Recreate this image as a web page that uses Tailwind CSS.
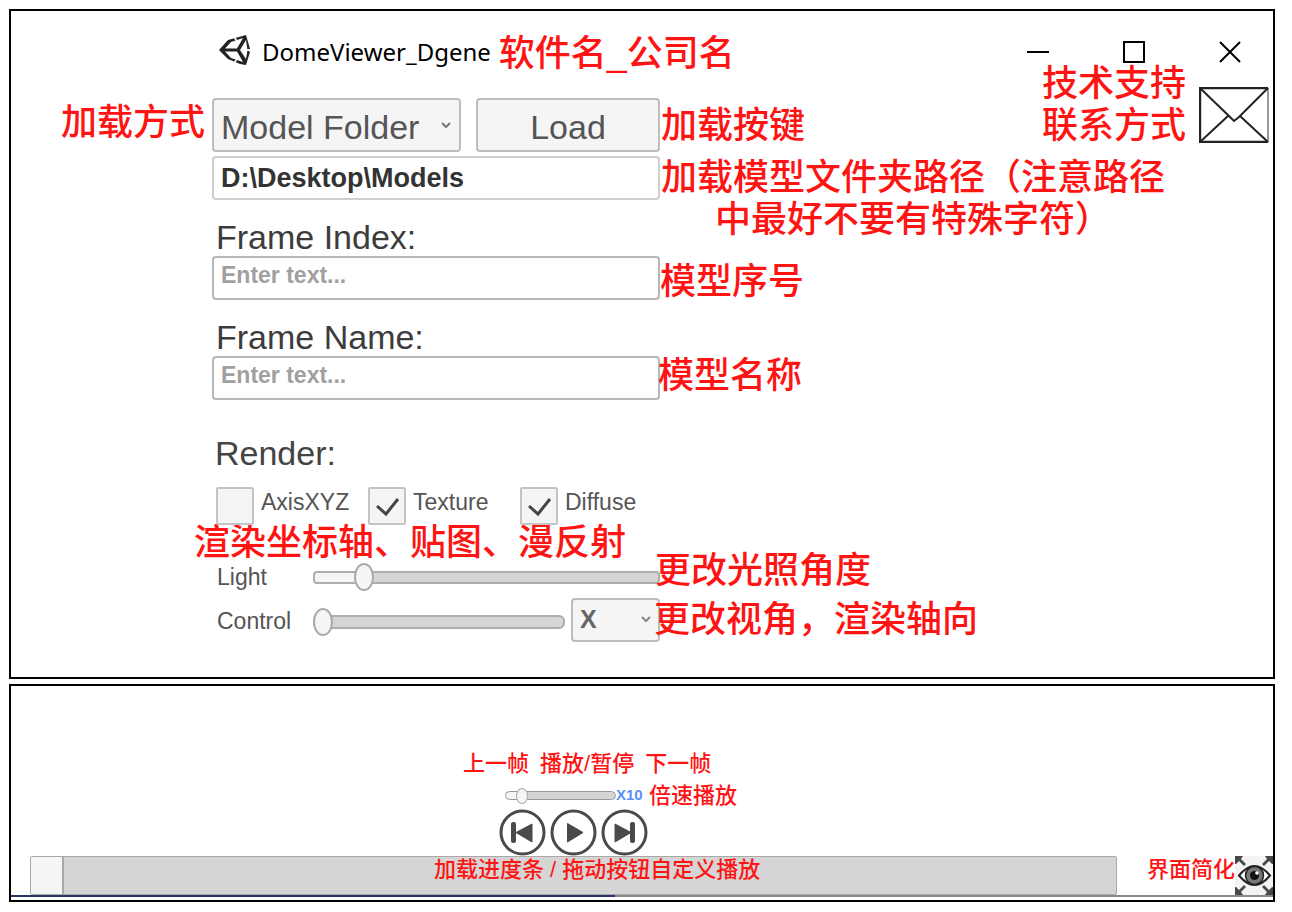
<!DOCTYPE html>
<html lang="zh-CN">
<head>
<meta charset="utf-8">
<meta name="viewport" content="width=device-width, initial-scale=1">
<title>DomeViewer_Dgene</title>
<script src="https://cdn.jsdelivr.net/npm/@tailwindcss/browser@4"></script>
</head>
<body class="bg-white font-['Liberation_Sans','Noto_Sans_CJK_SC',sans-serif] text-[#444]">
<main class="flex flex-col gap-[5px] pt-[9px] pr-[17px] pl-[9px]">

  <section class="border-2 border-black pb-[35px]" aria-label="DomeViewer">
    <!-- title bar -->
    <header class="flex h-[82px] items-center pl-[208px] pr-[31px]">
      <svg class="mb-1 h-8 w-8 shrink-0" viewBox="0 0 32 32" aria-hidden="true">
        <path fill="#222" fill-rule="evenodd" d="M0 16 9 6l18-5 4 14-3 1 3 2-4 13-6-1-12-5zM6 14.500h12L24 4 12 8zM6 17.500 12 24l12 4-6-10.500zM21 16l6 9 1.500-9L27 6z"/>
        <path d="m15 3 3 4M15 29l3-4M28 16h4" stroke="#fff" stroke-width="1.500"/>
      </svg>
      <h1 class="ml-[11px] font-['Noto_Sans','Open_Sans',sans-serif] text-2xl leading-9 text-black">DomeViewer_Dgene</h1>
      <span class="mt-1 ml-2 text-4xl font-medium leading-9 text-[#ff1414]">软件名_公司名</span>
      <div class="ml-auto flex items-center gap-[72px]">
        <button type="button" aria-label="最小化"><svg class="h-6 w-6" viewBox="0 0 24 24" stroke="#000" stroke-width="2"><path d="M1 12h22"/></svg></button>
        <button type="button" aria-label="最大化"><svg class="h-6 w-6" viewBox="0 0 24 24" fill="none" stroke="#000" stroke-width="2"><path d="M2 2h20v20H2z"/></svg></button>
        <button type="button" aria-label="关闭"><svg class="h-6 w-6" viewBox="0 0 24 24" fill="none" stroke="#000" stroke-width="2"><path d="m2 2 20 20M22 2 2 22"/></svg></button>
      </div>
    </header>

    <!-- load controls -->
    <div class="mt-[5px] flex h-[54px] items-center pr-1">
      <label for="mode" class="mb-1 w-[201px] shrink-0 pr-[7px] text-right text-4xl font-medium leading-9 text-[#ff1414]">加载方式</label>
      <div class="relative h-full w-[249px] shrink-0">
        <select id="mode" class="h-full w-full appearance-none rounded border-2 border-[#bdbdbd] bg-[#f5f5f5] pt-[2px] pl-[7px] text-[34px] text-[#555]"><option>Model Folder</option></select>
        <svg class="pointer-events-none absolute top-6 right-[10px] h-2 w-[10px]" viewBox="0 0 10 8" fill="none" stroke="#777" stroke-width="2"><path d="m1 1 4 4 4-4"/></svg>
      </div>
      <button type="button" class="ml-[15px] h-full w-[184px] shrink-0 rounded border-2 border-[#bdbdbd] bg-[#f5f5f5] pt-[2px] text-[34px] text-[#555]">Load</button>
      <span class="mt-[2px] ml-px text-4xl font-medium leading-9 text-[#ff1414]">加载按键</span>
      <div class="-mt-10 ml-auto flex items-end gap-[13px]">
        <p class="text-4xl font-medium leading-[42px] text-[#ff1414]">技术支持<br>联系方式</p>
        <button type="button" class="mb-1" aria-label="技术支持联系方式">
          <svg class="h-[56px] w-[70px]" viewBox="0 0 70 56" fill="none" stroke="#222" stroke-width="2">
            <path d="M69 1H1v54h68" stroke-width="2.400"/><path d="M69 1v54" stroke="#999"/>
            <path d="m1 1 30 29 4 4 5-4L69 1M1 55l28-26M69 55 41 29"/>
          </svg>
        </button>
      </div>
    </div>

    <div class="mt-1 flex h-11 items-start pl-[201px]">
      <input aria-label="加载模型文件夹路径" value="D:\Desktop\Models" class="h-11 w-[448px] shrink-0 rounded border-2 border-[#cfcfcf] bg-white px-[7px] text-[27px] font-bold text-[#333]">
      <p class="shrink-0 pt-px pl-px text-center text-4xl font-medium leading-[42px] text-[#ff1414]">加载模型文件夹路径（注意路径<br>中最好不要有特殊字符）</p>
    </div>

    <label for="index" class="mt-[18px] block w-fit pl-[205px] text-[34px] leading-[38px] text-[#3c3c3c]">Frame Index:</label>
    <div class="flex h-11 items-center pl-[201px]">
      <input id="index" placeholder="Enter text..." class="h-11 w-[448px] shrink-0 rounded border-2 border-[#b8b8b8] bg-white px-[7px] pb-[6px] text-[23px] font-bold placeholder:text-[#a0a0a0]">
      <span class="mt-2 text-4xl font-medium leading-9 text-[#ff1414]">模型序号</span>
    </div>

    <label for="name" class="mt-[18px] block w-fit pl-[205px] text-[34px] leading-[38px] text-[#3c3c3c]">Frame Name:</label>
    <div class="flex h-11 items-center pl-[201px]">
      <input id="name" placeholder="Enter text..." class="h-11 w-[448px] shrink-0 rounded border-2 border-[#b8b8b8] bg-white px-[7px] pb-[6px] text-[23px] font-bold placeholder:text-[#a0a0a0]">
      <span class="-ml-[2px] mb-1 text-4xl font-medium leading-9 text-[#ff1414]">模型名称</span>
    </div>

    <!-- render options -->
    <fieldset>
      <legend class="pt-[34px] pl-[204px] text-[34px] leading-[39px]">Render:</legend>
      <div class="mt-[14px] flex gap-[14px] pl-[205px] text-[23px] leading-[30px] text-[#555]">
        <label class="flex w-[138px] gap-[7px]">
          <span class="relative h-[38px] w-[38px] shrink-0"><input type="checkbox" class="peer h-full w-full appearance-none rounded-xs border-2 border-[#c4c4c4] bg-[#f5f5f5]"></span>AxisXYZ</label>
        <label class="flex w-[138px] gap-[7px]">
          <span class="relative h-[38px] w-[38px] shrink-0"><input type="checkbox" checked class="peer h-full w-full appearance-none rounded-xs border-2 border-[#c4c4c4] bg-[#f5f5f5]"><svg class="pointer-events-none absolute inset-0 hidden peer-checked:block" viewBox="0 0 38 38" fill="none" stroke="#444" stroke-width="3"><path d="m9 19 9 8L30 12"/></svg></span>Texture</label>
        <label class="flex w-[138px] gap-[7px]">
          <span class="relative h-[38px] w-[38px] shrink-0"><input type="checkbox" checked class="peer h-full w-full appearance-none rounded-xs border-2 border-[#c4c4c4] bg-[#f5f5f5]"><svg class="pointer-events-none absolute inset-0 hidden peer-checked:block" viewBox="0 0 38 38" fill="none" stroke="#444" stroke-width="3"><path d="m9 19 9 8L30 12"/></svg></span>Diffuse</label>
      </div>
      <p class="pl-[183px] text-4xl font-medium leading-9 text-[#ff1414]">渲染坐标轴、贴图、漫反射</p>

      <div class="-mt-[2px] flex h-9 items-center pl-[206px] text-[23px] text-[#555]">
        <label for="light" class="w-[96px] shrink-0">Light</label>
        <input id="light" type="range" min="0" max="100" value="12" class="h-[13px] w-[347px] shrink-0 appearance-none rounded-sm border-2 border-[#adadad] bg-linear-to-r from-[#f5f5f5] from-14% to-[#d5d5d5] to-14% [&::-webkit-slider-thumb]:h-7 [&::-webkit-slider-thumb]:w-5 [&::-webkit-slider-thumb]:appearance-none [&::-webkit-slider-thumb]:rounded-[50%] [&::-webkit-slider-thumb]:border-2 [&::-webkit-slider-thumb]:border-[#aaa] [&::-webkit-slider-thumb]:bg-[#f5f5f5]">
        <span class="z-10 mb-3 -ml-[5px] text-4xl font-medium leading-9 text-[#ff1414]">更改光照角度</span>
      </div>
      <div class="mt-[3px] flex h-11 items-center pl-[206px] text-[23px] text-[#555]">
        <label for="control" class="mt-[2px] w-[96px] shrink-0">Control</label>
        <input id="control" type="range" min="0" max="100" value="0" class="mt-[4px] h-[14px] w-[252px] shrink-0 appearance-none rounded-md border-2 border-[#adadad] bg-[#d5d5d5] [&::-webkit-slider-thumb]:h-7 [&::-webkit-slider-thumb]:w-5 [&::-webkit-slider-thumb]:-translate-x-[2px] [&::-webkit-slider-thumb]:appearance-none [&::-webkit-slider-thumb]:rounded-[50%] [&::-webkit-slider-thumb]:border-2 [&::-webkit-slider-thumb]:border-[#aaa] [&::-webkit-slider-thumb]:bg-[#f5f5f5]">
        <div class="relative ml-[6px] h-11 w-[89px] shrink-0">
          <select aria-label="渲染轴向" class="h-full w-full appearance-none rounded border-2 border-[#bdbdbd] bg-[#f5f5f5] pl-[7px] text-[25px] font-bold text-[#666]"><option>X</option><option>Y</option><option>Z</option></select>
          <svg class="pointer-events-none absolute top-[18px] right-[9px] h-2 w-[10px]" viewBox="0 0 10 8" fill="none" stroke="#888" stroke-width="2"><path d="m1 1 4 4 4-4"/></svg>
        </div>
        <span class="z-10 -ml-[6px] text-4xl font-medium leading-9 text-[#ff1414]">更改视角，渲染轴向</span>
      </div>
    </fieldset>
  </section>

  <!-- playback -->
  <section class="border-2 border-black pt-16 pb-[3px]" aria-label="播放">
    <p class="flex gap-[11px] pl-[452px] text-[22px] font-medium leading-7 text-[#ff1414]"><span>上一帧</span><span>播放/暂停</span><span>下一帧</span></p>
    <div class="mt-1 flex h-[27px] items-center pl-[494px]">
      <input aria-label="倍速播放" type="range" min="0" max="100" value="10" class="h-[9px] w-[111px] shrink-0 appearance-none rounded-md border border-[#999] bg-linear-to-r from-[#f5f5f5] from-14% to-[#d5d5d5] to-14% [&::-webkit-slider-thumb]:h-4 [&::-webkit-slider-thumb]:w-3 [&::-webkit-slider-thumb]:appearance-none [&::-webkit-slider-thumb]:rounded-[50%] [&::-webkit-slider-thumb]:border [&::-webkit-slider-thumb]:border-[#aaa] [&::-webkit-slider-thumb]:bg-[#f5f5f5]">
      <span class="w-[33px] text-[15px] font-bold text-[#5a90f5]">X10</span>
      <span class="text-[22px] font-medium leading-7 text-[#ff1414]">倍速播放</span>
    </div>
    <div class="flex h-[46px] items-center gap-1 pl-[488px]">
      <button type="button" aria-label="上一帧"><svg class="h-[47px] w-[47px]" viewBox="0 0 47 47" fill="#4a4a4a"><circle cx="23.500" cy="23.500" r="21.500" fill="none" stroke="#4a4a4a" stroke-width="3"/><rect x="12" y="13" width="5" height="21" rx="2"/><path d="M17 23.500 33 15v18z" stroke="#4a4a4a" stroke-linejoin="round"/></svg></button>
      <button type="button" aria-label="播放/暂停"><svg class="h-[47px] w-[47px]" viewBox="0 0 47 47" fill="#4a4a4a"><circle cx="23.500" cy="23.500" r="21.500" fill="none" stroke="#4a4a4a" stroke-width="3"/><path d="M17.500 14.500 33 23.500l-15.500 9.500z" stroke="#4a4a4a" stroke-linejoin="round"/></svg></button>
      <button type="button" aria-label="下一帧"><svg class="h-[47px] w-[47px]" viewBox="0 0 47 47" fill="#4a4a4a"><circle cx="23.500" cy="23.500" r="21.500" fill="none" stroke="#4a4a4a" stroke-width="3"/><path d="M14 15v18l16-9.500z" stroke="#4a4a4a" stroke-linejoin="round"/><rect x="29" y="13" width="5" height="21" rx="2"/></svg></button>
    </div>
    <div class="flex h-10 pt-px pl-[19px]">
      <div class="relative h-[39px] min-w-0 flex-1">
        <input id="progress" type="range" min="0" max="100" value="0" class="block h-full w-full appearance-none rounded-xs border border-[#a8a8a8] bg-[#d5d5d5] [&::-webkit-slider-thumb]:h-[37px] [&::-webkit-slider-thumb]:w-[33px] [&::-webkit-slider-thumb]:appearance-none [&::-webkit-slider-thumb]:border-r-2 [&::-webkit-slider-thumb]:border-[#a8a8a8] [&::-webkit-slider-thumb]:bg-[#f5f5f5]">
        <label for="progress" class="pointer-events-none absolute top-0 left-[404px] text-[22px] font-medium leading-7 whitespace-nowrap text-[#ff1414]">加载进度条 / 拖动按钮自定义播放</label>
      </div>
      <span class="ml-[30px] text-[22px] font-medium leading-7 text-[#ff1414]">界面简化</span>
      <button type="button" class="h-[39px] w-[38px] bg-[#f3f3f3]" aria-label="界面简化">
        <svg class="h-[39px] w-[38px]" viewBox="0 0 38 39" fill="#484848">
          <path d="M0 0h8L6 3l5 5-2 2-5-5-3 3H0zM38 0h-8l2 3-5 5 2 2 5-5 3 3h1zM0 39h8l-2-3 5-5-2-2-5 5-3-3H0zM38 39h-8l2-3-5-5 2-2 5 5 3-3h1z"/>
          <path d="M4 19.500Q12 10 19.500 10T35 19.500Q27 29 19.500 29T4 19.500z" fill="#fff" stroke="#222" stroke-width="2"/>
          <circle cx="19.500" cy="19.500" r="9" fill="#777" stroke="#222" stroke-width="1.500"/>
          <circle cx="19.500" cy="19.500" r="4.500" fill="#111"/><circle cx="22" cy="17" r="1.800" fill="#fff"/>
        </svg>
      </button>
    </div>
    <div class="flex h-[2px]"><div class="w-[604px] bg-[#2b3563]"></div><div class="flex-1 bg-[#858885]"></div></div>
  </section>
</main>
</body>
</html>
